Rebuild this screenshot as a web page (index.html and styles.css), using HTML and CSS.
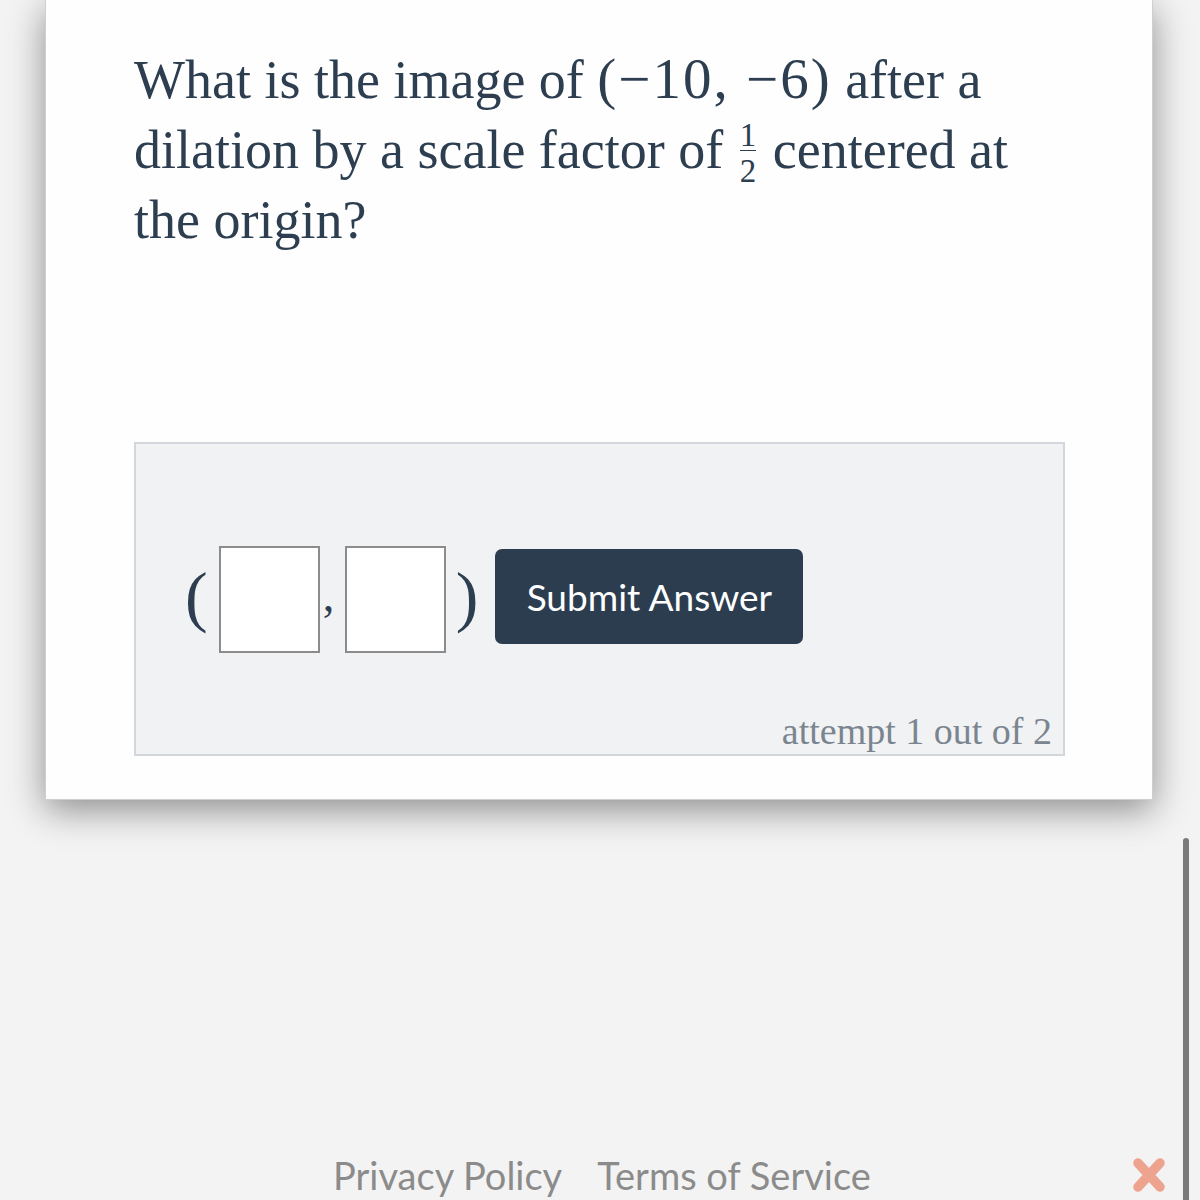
FILE: index.html
```html
<!DOCTYPE html>
<html lang="en">
<head>
<meta charset="utf-8">
<title>Dilation question</title>
<link rel="stylesheet" href="styles.css">
</head>
<body>
<main class="card">
  <p class="question">What is the image of <span class="math">(−10, −6)</span> after a<br>dilation by a scale factor of <span class="frac"><span class="num">1</span><span class="den">2</span></span> centered at<br>the origin?</p>
  <section class="answer-box">
    <div class="answer-row">
      <span class="paren open">(</span>
      <span class="field"></span>
      <span class="comma">,</span>
      <span class="field"></span>
      <span class="paren close">)</span>
      <button class="submit" type="button">Submit Answer</button>
    </div>
    <p class="attempt">attempt 1 out of 2</p>
  </section>
</main>
<footer class="footer">
  <a class="footer-link">Privacy Policy</a>
  <a class="footer-link">Terms of Service</a>
  <span class="close-x" aria-label="close">
    <svg width="36" height="36" viewBox="0 0 36 36"><path d="M7 6 L29 30 M29 6 L7 30" stroke="#eea38f" stroke-width="9.5" stroke-linecap="round" fill="none"/></svg>
  </span>
</footer>
<div class="scrollbar"></div>
</body>
</html>
```
FILE: styles.css
```css
html, body {
  margin: 0;
  padding: 0;
}
body {
  background: #f3f3f3;
  width: 1200px;
  height: 1200px;
  overflow: hidden;
  position: relative;
  font-family: "Liberation Serif", "Times New Roman", serif;
  color: #2c3e50;
}
.card {
  margin-left: 45px;
  width: 1108px;
  box-sizing: border-box;
  background: #fefefe;
  border: 1px solid #cfcfcf;
  border-top: none;
  padding: 44px 87px 43px 88px;
  box-shadow: 0 10px 34px rgba(0, 0, 0, 0.42);
}
.question {
  margin: 0;
  font-size: 54px;
  line-height: 70px;
  color: #2c3e50;
}
.math {
  font-size: 57px;
  letter-spacing: 2px;
}
.frac {
  display: inline-flex;
  flex-direction: column;
  align-items: center;
  vertical-align: 22.5px;
  font-size: 33px;
  padding: 0 3px;
}
.num {
  line-height: 26px;
  padding-bottom: 2px;
}
.den {
  line-height: 20px;
  padding-top: 10.5px;
  border-top: 1.5px solid #2c3e50;
  align-self: stretch;
  text-align: center;
}
.answer-box {
  margin-top: 187px;
  border: 2px solid #d3d6da;
  background: #f1f2f4;
  padding: 102px 11px 1px 49px;
}
.answer-row {
  display: flex;
  align-items: center;
}
.paren {
  font-size: 68px;
  line-height: 66px;
  margin-bottom: 8px;
  color: #2c3e50;
}
.paren.open {
  margin-right: 11px;
}
.paren.close {
  margin-left: 10px;
}
.field {
  display: block;
  width: 101px;
  height: 107px;
  box-sizing: border-box;
  border: 2px solid #8c8c8c;
  background: #ffffff;
}
.comma {
  align-self: flex-end;
  font-size: 46px;
  line-height: 44px;
  width: 22px;
  padding-left: 3px;
  margin-bottom: 35px;
}
.submit {
  margin-left: 17px;
  margin-bottom: 6px;
  width: 308px;
  height: 95px;
  border: none;
  border-radius: 7px;
  background: #2c3d50;
  color: #ffffff;
  font-family: Lato, "Open Sans", sans-serif;
  font-size: 37px;
  padding: 0;
}
.attempt {
  margin: 56px 0 0;
  text-align: right;
  font-size: 38px;
  line-height: 44px;
  color: #7b858f;
}
.footer {
  display: flex;
  align-items: center;
  gap: 35px;
  margin-top: 352px;
  padding: 0 33px 0 333px;
  font-family: Lato, "Open Sans", sans-serif;
  font-size: 38px;
  line-height: 46px;
  color: #8b8b8b;
}
.footer-link {
  white-space: nowrap;
}
.close-x {
  margin-left: auto;
  display: flex;
}
.scrollbar {
  position: absolute;
  right: 11px;
  top: 838px;
  bottom: 0;
  width: 6px;
  border-radius: 3px 3px 0 0;
  background: #7a7a7a;
}
```
